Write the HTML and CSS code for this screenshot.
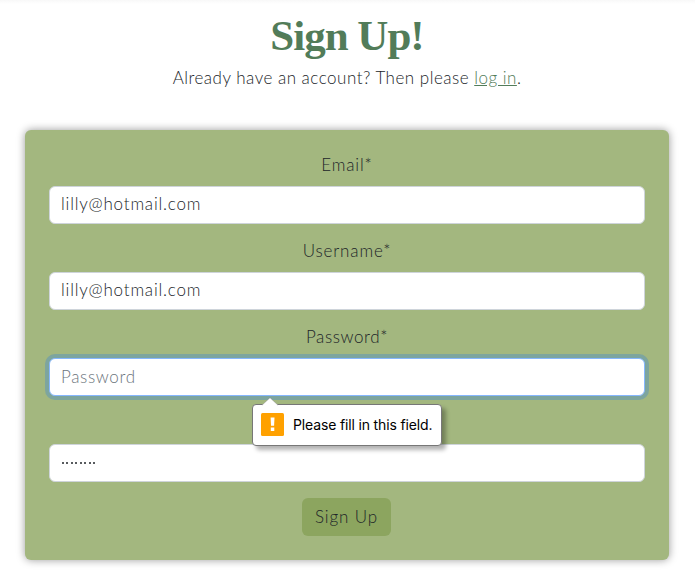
FILE: index.html
```html
<!DOCTYPE html>
<html lang="en">
<head>
<meta charset="utf-8">
<title>Sign Up</title>
<link rel="stylesheet" href="styles.css">
</head>
<body>
<main class="page">
  <h1 class="title">Sign Up!</h1>
  <p class="intro">Already have an account? Then please <a class="link" href="#">log in</a>.</p>
  <form class="card">
    <div class="label">Email*</div>
    <div class="input"><span class="value-email">lilly@hotmail.com</span></div>
    <div class="label">Username*</div>
    <div class="input"><span class="value-email">lilly@hotmail.com</span></div>
    <div class="label label-pass">Password*</div>
    <div class="input focused"><span class="placeholder">Password</span>
      <div class="tooltip">
        <svg class="arrow" width="18" height="9" viewBox="0 0 18 9"><path d="M0 9L9 .7L18 9Z" fill="#fff"/><path d="M1 8.2L9 .7L17 8.2" fill="none" stroke="#777" stroke-width=".4"/></svg>
        <svg class="warning" width="23" height="23" viewBox="0 0 23 23"><rect width="23" height="23" rx="1.5" fill="#ffa100"/><path d="M9.6 4.6h3.9l-.4 8.2h-3.1zM9.8 14.4h3.5v3.5H9.8z" fill="#fff"/></svg>
        <span class="message">Please fill in this field.</span>
      </div>
    </div>
    <div class="label"></div>
    <div class="input"><span class="dots"><i></i><i></i><i></i><i></i><i></i><i></i><i></i><i></i></span></div>
    <button class="submit" type="button">Sign Up</button>
  </form>
</main>
</body>
</html>
```
FILE: styles.css
```css
* { box-sizing: border-box; }
body {
  margin: 0;
  height: 582px;
  overflow: hidden;
  background: linear-gradient(#f8f8f8, #fff 4px);
  color: #212529;
  font: 300 17px/24px Lato, "Liberation Sans", sans-serif;
}
.page { padding: 10px 26px 0 25px; }
.title {
  margin: 0 0 8px;
  height: 48px;
  text-align: center;
  color: #527c59;
  font: 700 43px/52px "Liberation Serif", serif;
  letter-spacing: -1px;
}
.intro {
  margin: 0 0 40px;
  text-align: center;
  white-space: nowrap;
  letter-spacing: 0.5px;
}
.link { color: #527c59; text-decoration: underline; }
.card {
  height: 430px;
  padding: 24px;
  border-radius: 6px;
  background: #a3b77f;
  box-shadow: 0 0 8px rgba(0, 0, 0, 0.4);
}
.label {
  height: 24px;
  margin-bottom: 8px;
  text-align: center;
  line-height: 22px;
  letter-spacing: 0.85px;
}
.label-pass { letter-spacing: 0.6px; }
.input {
  position: relative;
  display: flex;
  align-items: center;
  height: 38px;
  margin-bottom: 16px;
  padding: 0 11px;
  border: 1px solid #ced4da;
  border-radius: 6px;
  background: #fff;
}
.value-email { padding-bottom: 2px; letter-spacing: 0.8px; }
.focused { border-color: #86b7fe; box-shadow: 0 0 0 4px rgba(13, 110, 253, 0.25); }
.placeholder { padding-bottom: 1px; color: #6c757d; letter-spacing: 0.65px; }
.tooltip {
  position: absolute;
  z-index: 1;
  left: 202px;
  top: 45px;
  display: flex;
  align-items: center;
  width: 190px;
  height: 42px;
  padding: 0 0 2px 8px;
  border: 1px solid #777;
  border-radius: 4px;
  background: #fff;
  box-shadow: 4px 4px 4px rgba(0, 0, 0, 0.3);
}
.arrow { position: absolute; left: 8px; top: -8px; }
.message {
  margin-left: 9px;
  padding-top: 2px;
  color: #000;
  white-space: nowrap;
  font: 400 14px/20px Inter, sans-serif;
  letter-spacing: -0.15px;
}
.dots { display: flex; gap: 2.5px; padding-left: 0.5px; }
.dots i { width: 2px; height: 2px; border-radius: 1px; background: #212529; }
.submit {
  display: block;
  width: 89px;
  height: 38px;
  margin: 0 auto 0 253px;
  padding: 0 0 1px;
  border: 0;
  border-radius: 6px;
  background: #8ca55f;
  color: #212529;
  font: inherit;
  letter-spacing: 0.9px;
}
```
